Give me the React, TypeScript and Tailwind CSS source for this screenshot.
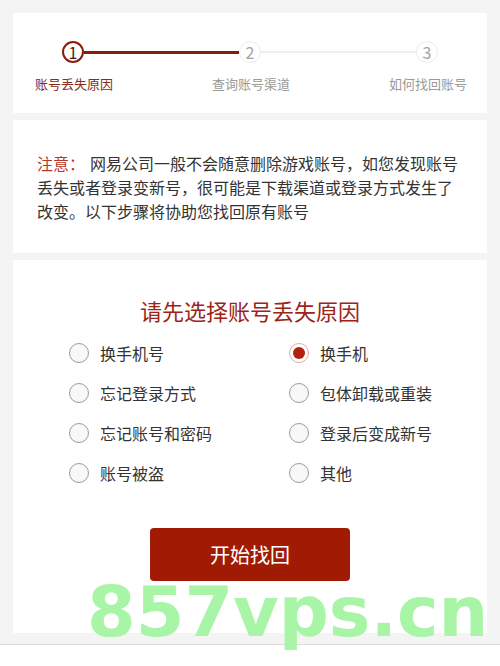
import React, { useState } from "react";

const reasons = [
  "换手机号",
  "换手机",
  "忘记登录方式",
  "包体卸载或重装",
  "忘记账号和密码",
  "登录后变成新号",
  "账号被盗",
  "其他",
];

const steps = ["账号丢失原因", "查询账号渠道", "如何找回账号"];

const font = { fontFamily: '"Noto Sans CJK SC", "Noto Sans", sans-serif' };

export default function App() {
  const [picked, setPicked] = useState(1);

  return (
    <div className="relative min-h-[666px] overflow-hidden bg-[#f4f4f4]" style={font}>
      <div className="flex flex-col gap-[7px] px-[13px] pt-[13px]">
        {/* steps */}
        <section className="h-[100px] bg-white pt-[28px]">
          <div className="flex items-center px-[49px]">
            <div className="flex h-[22px] w-[22px] items-center justify-center rounded-full border-2 border-[#8b1c0c] text-[16px] leading-none text-[#4a1a12]">
              1
            </div>
            <div className="h-[3px] flex-1 bg-[#8b1c0c]" />
            <div className="flex h-[22px] w-[22px] items-center justify-center rounded-full border-[1.5px] border-[#ececec] text-[16px] leading-none text-[#a3a3a3]">
              2
            </div>
            <div className="h-[2px] flex-1 bg-[#efefef]" />
            <div className="flex h-[22px] w-[22px] items-center justify-center rounded-full border-[1.5px] border-[#ececec] text-[16px] leading-none text-[#a3a3a3]">
              3
            </div>
          </div>
          <div className="mt-[12px] flex justify-between pl-[22px] pr-[20px] text-[13px] leading-[18px]">
            {steps.map((s, i) => (
              <span key={s} className={i === 0 ? "text-[#8a2a1a]" : "text-[#9a9a9a]"}>
                {s}
              </span>
            ))}
          </div>
        </section>

        {/* notice */}
        <p className="bg-white px-[24px] pb-[30px] pt-[31px] text-[16px] leading-[24px] text-[#333]">
          <span className="mr-[5px] text-[#b8392a]">注意：</span>网易公司一般不会随意删除游戏账号，如您发现账号丢失或者登录变新号，很可能是下载渠道或登录方式发生了改变。以下步骤将协助您找回原有账号
        </p>

        {/* reasons */}
        <section className="h-[373px] bg-white pt-[35px]">
          <h2 className="mb-[8px] text-center text-[22px] leading-[30px] text-[#9d2417]">请先选择账号丢失原因</h2>
          <div className="grid grid-cols-[220px_220px] pl-[56px]">
            {reasons.map((r, i) => (
              <button
                key={r}
                onClick={() => setPicked(i)}
                className="flex h-[40px] items-center gap-[11px] text-left text-[16px] text-[#333]"
              >
                {picked === i ? (
                  <span className="flex h-[20px] w-[20px] items-center justify-center rounded-full border-[1.5px] border-[#e2aaa2] bg-white">
                    <span className="h-[12px] w-[12px] rounded-full bg-[#b3200e]" />
                  </span>
                ) : (
                  <span className="h-[20px] w-[20px] rounded-full border-[1.5px] border-[#9c9c9c] bg-[#f8f8f8]" />
                )}
                {r}
              </button>
            ))}
          </div>
          <div className="mt-[35px] flex justify-center">
            <button className="h-[53px] w-[200px] rounded-[4px] bg-[#a11a04] text-[20px] text-white">开始找回</button>
          </div>
        </section>
      </div>

      <footer className="mt-[11px] h-[30px] border-t border-[#dcdcdc] bg-white" />

      <div
        className="pointer-events-none absolute left-[87px] top-[577px] text-[70px] font-bold leading-none text-[#a8f5a8]"
        style={{ fontFamily: '"DejaVu Sans", sans-serif' }}
      >
        857vps.cn
      </div>
    </div>
  );
}
